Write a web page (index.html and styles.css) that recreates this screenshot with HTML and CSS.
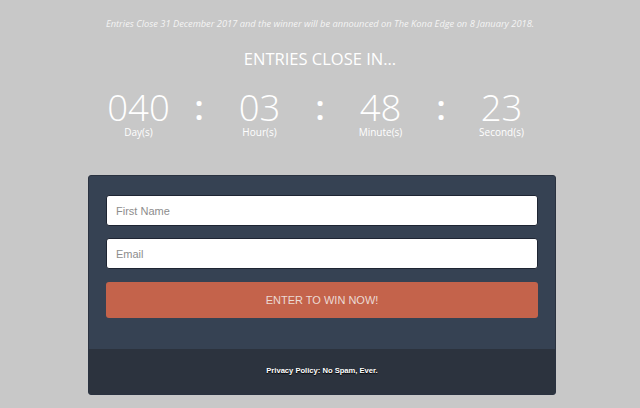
FILE: index.html
```html
<!DOCTYPE html>
<html>
<head>
<meta charset="utf-8">
<link rel="stylesheet" href="styles.css">
</head>
<body>
<div class="page">
  <p class="note">Entries Close 31 December 2017 and the winner will be announced on The Kona Edge on 8 January 2018.</p>
  <h2 class="title">ENTRIES CLOSE IN...</h2>
  <div class="countdown">
    <div class="unit"><span class="num">040</span><span class="lbl">Day(s)</span></div>
    <div class="colon">:</div>
    <div class="unit"><span class="num">03</span><span class="lbl">Hour(s)</span></div>
    <div class="colon">:</div>
    <div class="unit"><span class="num">48</span><span class="lbl">Minute(s)</span></div>
    <div class="colon">:</div>
    <div class="unit"><span class="num">23</span><span class="lbl">Second(s)</span></div>
  </div>
  <div class="card">
    <form class="form">
      <input class="field" type="text" placeholder="First Name">
      <input class="field" type="text" placeholder="Email">
      <button class="btn" type="button">ENTER TO WIN NOW!</button>
    </form>
    <div class="foot">Privacy Policy: No Spam, Ever.</div>
  </div>
</div>
</body>
</html>
```
FILE: styles.css
```css
html, body {
  margin: 0;
  padding: 0;
  background: #c8c8c8;
}
.page {
  width: 640px;
  height: 408px;
  display: flex;
  flex-direction: column;
  align-items: center;
  font-family: "Open Sans", sans-serif;
  color: #fff;
}
.note {
  margin: 18px 0 0;
  font-size: 9.3px;
  font-style: italic;
  line-height: 12px;
  color: #f4f4f4;
}
.title {
  margin: 19px 0 0;
  font-size: 16.5px;
  font-weight: 400;
  line-height: 20px;
}
.countdown {
  display: flex;
  margin-top: 20px;
}
.unit {
  width: 80px;
  display: flex;
  flex-direction: column;
  align-items: center;
}
.num {
  font-size: 36.5px;
  font-weight: 300;
  line-height: 36px;
}
.lbl {
  font-size: 10px;
  line-height: 12px;
  margin-top: 1px;
}
.colon {
  width: 41px;
  text-align: center;
  font-size: 35px;
  font-weight: 600;
  line-height: 36px;
}
.card {
  margin-top: 37px;
  margin-left: 4px;
  width: 468px;
  height: 220px;
  box-sizing: border-box;
  background: #364253;
  border: 1px solid #2a3240;
  border-radius: 3px;
  display: flex;
  flex-direction: column;
  overflow: hidden;
}
.form {
  flex: 1;
  padding: 19px 17px 0;
  display: flex;
  flex-direction: column;
}
.field {
  height: 31px;
  box-sizing: border-box;
  border: 1px solid #1e2533;
  border-radius: 3px;
  background: #fff;
  padding: 0 9px;
  font-family: "Liberation Sans", sans-serif;
  font-size: 11px;
  margin: 0 0 12px;
  outline: none;
}
.field::placeholder {
  color: #8d8d8d;
}
.btn {
  margin-top: 1px;
  height: 36px;
  border: none;
  border-radius: 3px;
  background: #c4634b;
  color: #ecdad4;
  font-family: "Liberation Sans", sans-serif;
  font-size: 11px;
}
.foot {
  height: 45px;
  padding-bottom: 3px;
  box-sizing: border-box;
  background: #2c333e;
  display: flex;
  align-items: center;
  justify-content: center;
  font-family: "Liberation Sans", sans-serif;
  font-size: 7.6px;
  font-weight: 700;
  color: #fff;
  text-shadow: 0 1px 1px #000;
}
```
